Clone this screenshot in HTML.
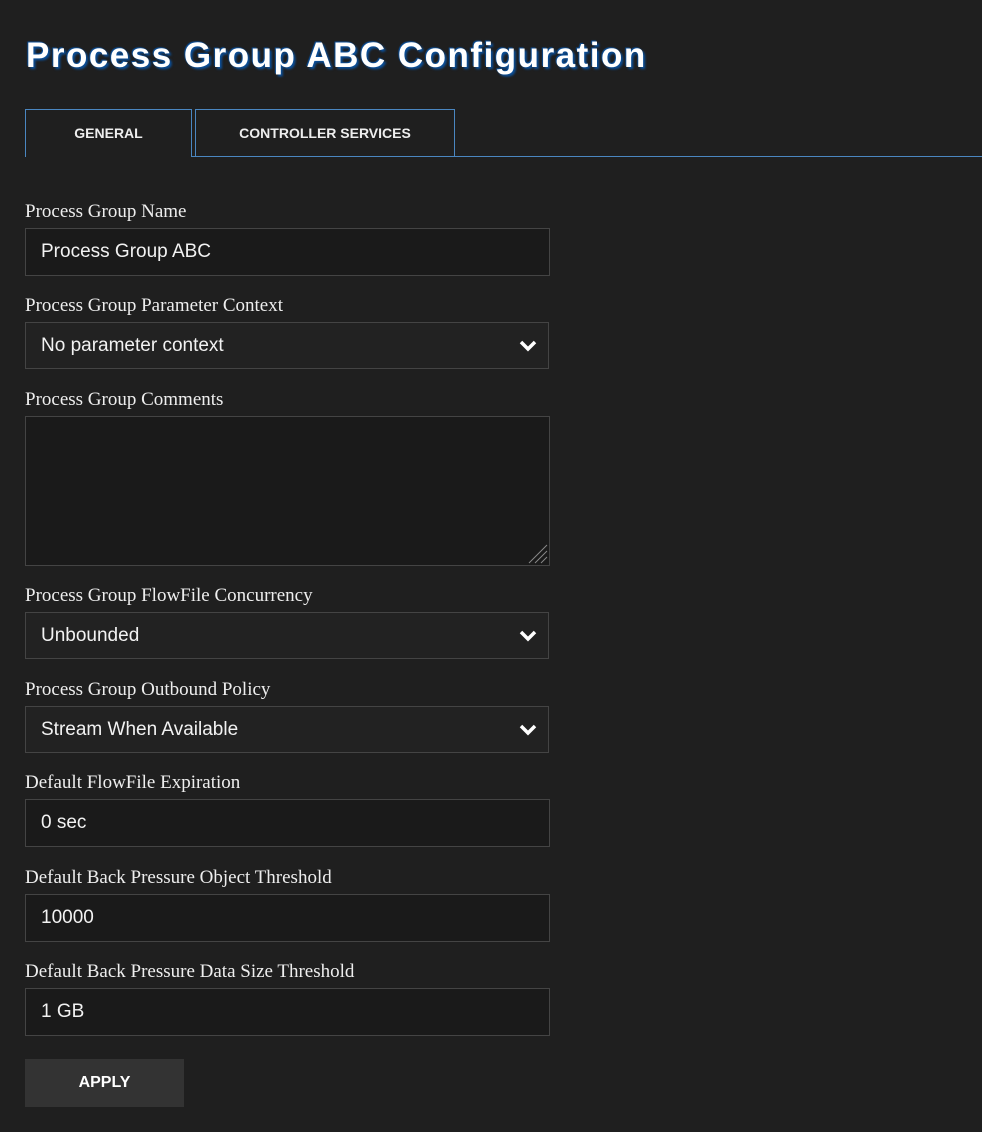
<!DOCTYPE html>
<html><head><style>
body{margin:0;background:#1f1f1f;width:982px;height:1132px;position:relative;overflow:hidden;font-family:"Liberation Sans",sans-serif;color:#fff}
.a{position:absolute}
h1{position:absolute;left:26px;top:36px;margin:0;font:bold 35px "Liberation Sans",sans-serif;letter-spacing:1.5px;color:#fff;text-shadow:2px 2px 2px #0a4f9a,-1px -1px 1px #0a4f9a;white-space:nowrap}
.tab{position:absolute;top:109px;height:48px;border:1px solid #4a86c0;box-sizing:border-box;font-weight:bold;font-size:14px;line-height:47px;text-align:center;color:#eee}
.lbl{position:absolute;left:25px;font:19px "Liberation Serif",serif;color:#eee}
.in{position:absolute;left:25px;width:525px;height:48px;box-sizing:border-box;border:1px solid #444;background:#1a1a1a;font-size:19px;line-height:46px;padding-left:15px;color:#f2f2f2}
.sel{background:#222;width:524px;height:47px}
.sel svg{position:absolute;right:11px;top:17px}
</style></head><body>
<h1>Process Group ABC Configuration</h1>
<div class="tab" style="left:25px;width:167px;border-bottom:none">GENERAL</div>
<div class="tab" style="left:195px;width:260px">CONTROLLER SERVICES</div>
<div class="a" style="left:455px;top:156px;width:527px;height:1px;background:#4a86c0"></div>
<div class="a" style="left:191px;top:156px;width:4px;height:1px;background:#4a86c0"></div>

<div class="lbl" style="top:201px">Process Group Name</div>
<div class="in" style="top:228px">Process Group ABC</div>
<div class="lbl" style="top:295px">Process Group Parameter Context</div>
<div class="in sel" style="top:322px">No parameter context<svg width="18" height="12" viewBox="0 0 18 12"><path d="M2 2l7 7 7-7" stroke="#fff" stroke-width="3.5" fill="none"/></svg></div>
<div class="lbl" style="top:389px">Process Group Comments</div>
<div class="in" style="top:416px;height:150px"><svg class="a" style="right:1px;bottom:1px" width="22" height="22" viewBox="0 0 22 22"><path d="M21 3L3 21M21 9L9 21M21 15L15 21" stroke="#888" stroke-width="1"/></svg></div>
<div class="lbl" style="top:585px">Process Group FlowFile Concurrency</div>
<div class="in sel" style="top:612px">Unbounded<svg width="18" height="12" viewBox="0 0 18 12"><path d="M2 2l7 7 7-7" stroke="#fff" stroke-width="3.5" fill="none"/></svg></div>
<div class="lbl" style="top:679px">Process Group Outbound Policy</div>
<div class="in sel" style="top:706px">Stream When Available<svg width="18" height="12" viewBox="0 0 18 12"><path d="M2 2l7 7 7-7" stroke="#fff" stroke-width="3.5" fill="none"/></svg></div>
<div class="lbl" style="top:772px">Default FlowFile Expiration</div>
<div class="in" style="top:799px">0 sec</div>
<div class="lbl" style="top:867px">Default Back Pressure Object Threshold</div>
<div class="in" style="top:894px">10000</div>
<div class="lbl" style="top:961px">Default Back Pressure Data Size Threshold</div>
<div class="in" style="top:988px">1 GB</div>
<div class="a" style="left:25px;top:1059px;width:159px;height:48px;background:#333;font-weight:bold;font-size:16px;line-height:48px;text-align:center">APPLY</div>
</body></html>
